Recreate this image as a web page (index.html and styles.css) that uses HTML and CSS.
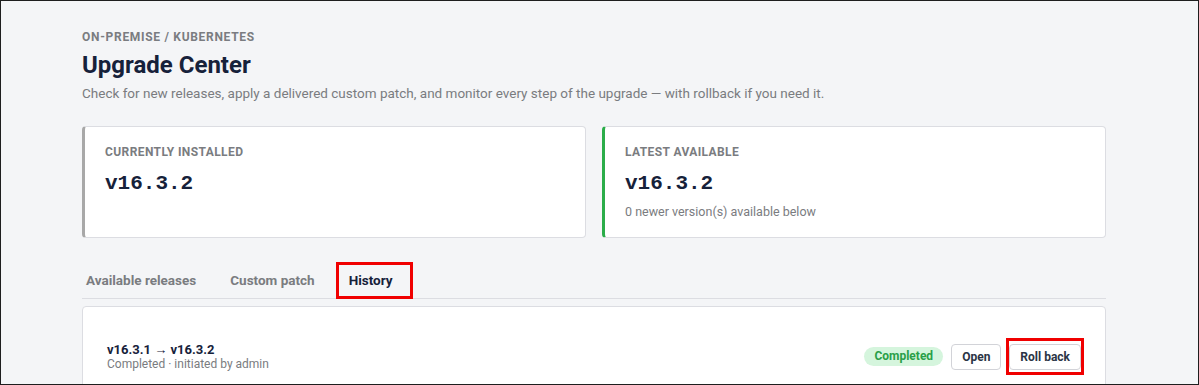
FILE: index.html
```html
<!DOCTYPE html>
<html lang="en">
<head>
    <meta charset="UTF-8">
    <meta name="viewport" content="width=device-width, initial-scale=1.0">
    <title>Upgrade Center</title>
    <link rel="stylesheet" href="styles.css">
</head>
<body>
    <div class="frame">
        <div class="container">
            <div class="header">
                <div class="crumb">On-premise / Kubernetes</div>
                <h1>Upgrade Center</h1>
                <p>Check for new releases, apply a delivered custom patch, and monitor every step of the upgrade — with rollback if you need it.</p>
            </div>

            <div class="versions">
                <div class="version-card installed">
                    <div class="label">Currently installed</div>
                    <div class="version">v16.3.2</div>
                </div>
                <div class="version-card latest">
                    <div class="label">Latest available</div>
                    <div class="version">v16.3.2</div>
                    <div class="hint">0 newer version(s) available below</div>
                </div>
            </div>

            <div class="tabs">
                <button class="tab">Available releases</button>
                <button class="tab">Custom patch</button>
                <button class="tab active highlight">History</button>
            </div>

            <div class="history-card">
                <div class="history-row">
                    <div class="history-info">
                        <div class="history-title">v16.3.1 → v16.3.2</div>
                        <div class="history-meta">Completed · initiated by admin</div>
                    </div>
                    <div class="history-actions">
                        <span class="badge">Completed</span>
                        <button class="btn">Open</button>
                        <button class="btn highlight">Roll back</button>
                    </div>
                </div>
            </div>
        </div>
    </div>
</body>
</html>
```

FILE: styles.css
```css
* {
    margin: 0;
    padding: 0;
    box-sizing: border-box;
    font-family: Roboto, "Liberation Sans", sans-serif;
}

body {
    background: #f4f5f7;
    color: #16213a;
}

.frame {
    height: 385px;
    border: 1px solid #1e1e1e;
    overflow: hidden;
    background: #f4f5f7;
}

.container {
    width: 1024px;
    margin-left: 81px;
    padding-top: 28px;
}

.crumb {
    font-size: 12px;
    line-height: 16px;
    font-weight: 700;
    letter-spacing: 0.7px;
    text-transform: uppercase;
    color: #7a7c80;
}

.header h1 {
    margin-top: 6px;
    font-size: 24px;
    line-height: 28px;
    font-weight: 700;
    color: #16213a;
}

.header p {
    margin-top: 4px;
    font-size: 13.5px;
    line-height: 20px;
    color: #7a7c80;
}

.versions {
    display: grid;
    grid-template-columns: 1fr 1fr;
    gap: 16px;
    margin-top: 23px;
}

.version-card {
    background: #fff;
    border: 1px solid #dcdde2;
    border-radius: 4px;
    padding: 17px 20px;
    height: 112px;
}

.version-card.installed {
    border-left: 3px solid #a8a8a8;
}

.version-card.latest {
    border-left: 3px solid #2bad49;
}

.label {
    font-size: 12px;
    line-height: 16px;
    font-weight: 700;
    letter-spacing: 0.4px;
    text-transform: uppercase;
    color: #7a7c80;
}

.version {
    margin-top: 11px;
    font-family: "Liberation Mono", monospace;
    font-size: 21px;
    line-height: 26px;
    font-weight: 700;
    color: #16213a;
}

.hint {
    margin-top: 7px;
    font-size: 12.5px;
    line-height: 16px;
    color: #7a7c80;
}

.tabs {
    display: flex;
    gap: 26px;
    margin-top: 25px;
    border-bottom: 1px solid #dcdde2;
}

.tab {
    position: relative;
    background: none;
    border: none;
    padding: 9px 4px;
    font-size: 13.5px;
    line-height: 17px;
    font-weight: 700;
    color: #7a7c80;
    cursor: pointer;
}

.tab.active {
    color: #16213a;
}

.highlight {
    position: relative;
}

.highlight::after {
    content: "";
    position: absolute;
    border: 3px solid #f00000;
    pointer-events: none;
}

.tab.highlight::after {
    top: -1px;
    bottom: -1px;
    left: -9px;
    right: -16px;
}

.btn.highlight::after {
    top: -7px;
    bottom: -6px;
    left: -4px;
    right: -4px;
}

.history-card {
    margin-top: 7px;
    background: #fff;
    border: 1px solid #dcdde2;
    border-radius: 4px;
    padding: 21px 24px;
}

.history-row {
    display: flex;
    align-items: center;
    justify-content: space-between;
    padding: 14px 0;
    border-bottom: 1px solid #e3e4e8;
}

.history-title {
    font-size: 13px;
    line-height: 15px;
    font-weight: 700;
    color: #16213a;
}

.history-meta {
    font-size: 12px;
    line-height: 14px;
    color: #7a7c80;
}

.history-actions {
    display: flex;
    align-items: center;
    gap: 8px;
}

.badge {
    padding: 2px 10px;
    border-radius: 10px;
    background: #d5f5dd;
    color: #2a9f48;
    font-size: 12px;
    line-height: 15px;
    font-weight: 700;
}

.btn {
    background: #fff;
    border: 1px solid #d2d3d8;
    border-radius: 4px;
    padding: 5px 10px;
    height: 26px;
    font-size: 12px;
    line-height: 14px;
    font-weight: 700;
    color: #2b3445;
    cursor: pointer;
}
```
